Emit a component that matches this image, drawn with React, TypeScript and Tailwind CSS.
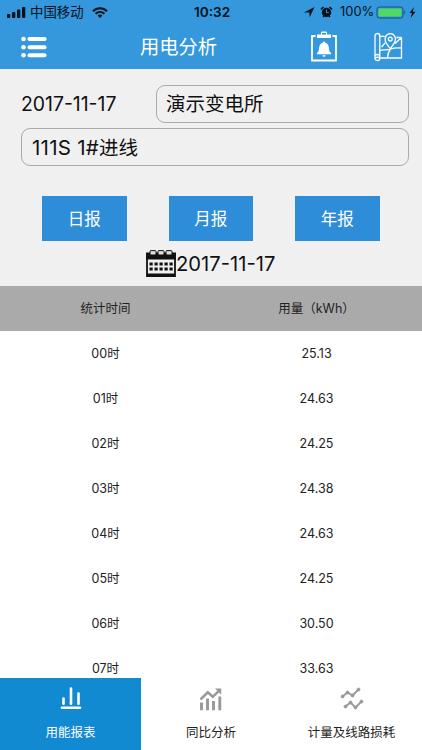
import React from "react";

const rows = [
  ["00时", "25.13"],
  ["01时", "24.63"],
  ["02时", "24.25"],
  ["03时", "24.38"],
  ["04时", "24.63"],
  ["05时", "24.25"],
  ["06时", "30.50"],
  ["07时", "33.63"],
];

function StatusBar() {
  return (
    <div className="flex h-6 items-center text-[13px] leading-6 text-[#04121e]">
      <svg className="ml-[7px] h-[11px] w-[19px]" viewBox="0 0 19 11" fill="currentColor">
        <rect x="0" y="7" width="3.3" height="4" rx="1" />
        <rect x="5" y="5" width="3.3" height="6" rx="1" />
        <rect x="10" y="2.5" width="3.3" height="8.5" rx="1" />
        <rect x="15" y="0" width="3.3" height="11" rx="1" />
      </svg>
      <span className="ml-[4px] w-[55px] whitespace-nowrap text-[13.4px]">中国移动</span>
      <svg className="ml-[7px] h-[11px] w-[16px]" viewBox="0 0 16 11">
        <path d="M1 4.2C5 .3 11 .3 15 4.2M3.6 6.8c2.6-2.4 6.2-2.4 8.8 0" fill="none" stroke="currentColor" strokeWidth="2" />
        <path d="M5.6 8.5q2.4-1.8 4.8 0L8 11z" fill="currentColor" />
      </svg>
      <span className="ml-[86px] w-[38px] whitespace-nowrap text-[13.6px] leading-[22px] font-semibold">10:32</span>
      <svg className="ml-[71px] h-[12px] w-[12px]" viewBox="0 0 12 12" fill="currentColor">
        <path d="M11.5 1 6.5 11.5V6.5H1z" />
      </svg>
      <svg className="ml-[5px] h-[12px] w-[13px]" viewBox="0 0 13 12">
        <circle cx="6.5" cy="6.5" r="4.7" fill="currentColor" />
        <path d="M1 3.3 3.5 1M12 3.3 9.5 1M3 11l1.5-1.5M10 11 8.5 9.5" stroke="currentColor" strokeWidth="1.6" />
        <path d="M6.5 3.7v3h2.3" fill="none" stroke="#3598dc" strokeWidth="1" />
      </svg>
      <span className="ml-[7px] w-[34px] whitespace-nowrap text-[12.9px]">100%</span>
      <svg className="ml-[2px] h-[13px] w-[40px]" viewBox="0 0 40 13">
        <rect x="1" y="1" width="26" height="11" rx="2.5" fill="none" stroke="#175079" />
        <rect x="2.5" y="2.5" width="23" height="8" rx="1" fill="#4fd964" />
        <path d="M28.3 4.5q2 2 0 4z" fill="#175079" />
        <path d="m38 1-4.5 6H36l-1.5 5L39.5 5.7h-2.8z" fill="currentColor" />
      </svg>
    </div>
  );
}

function NavBar() {
  return (
    <div className="flex h-[45px] items-center text-white">
      <svg className="ml-[21px] h-[22px] w-[26px]" viewBox="0 0 26 22" fill="currentColor">
        <circle cx="2.5" cy="3" r="2.3" />
        <circle cx="2.5" cy="11.3" r="2.3" />
        <circle cx="2.5" cy="19.3" r="2.3" />
        <rect x="6.5" y="1" width="19" height="4" rx="1.8" />
        <rect x="6.5" y="9.3" width="19" height="4" rx="1.8" />
        <rect x="6.5" y="17.3" width="19" height="4" rx="1.8" />
      </svg>
      <h1 className="ml-[93px] whitespace-nowrap text-[19.3px] leading-[46px]">用电分析</h1>
      <div className="mr-[19px] ml-auto flex items-center gap-[35px]">
        <svg className="h-[32px] w-[28px]" viewBox="0 0 28 32" fill="none">
          <path d="M5.5 5H2v24.5h24V5h-3.5" stroke="currentColor" strokeWidth="1.8" />
          <path d="M7 3.5h4V2q0-1.400 1.400-1.400h3.200Q17 .6 17 2v1.500h4V7H7z" fill="currentColor" />
          <rect x="12" y="1.9" width="4" height="1.7" fill="#3598dc" />
          <path d="M14 10.500q1.200 0 1.300 1.300c2.700.8 3.600 3 3.700 6 .1 2.500.8 3.400 2 4.200v1.200H7V22c1.200-.8 1.900-1.700 2-4.200.1-3 1-5.200 3.700-6q.1-1.300 1.300-1.300zM12.300 24.200h3.400q-.3 1.500-1.700 1.500t-1.700-1.500z" fill="currentColor" />
        </svg>
        <svg className="h-[30px] w-[30px]" viewBox="0 0 30 30" fill="none" stroke="currentColor" strokeWidth="1.3">
          <rect x="2" y="1.5" width="4.800" height="27" rx="2.300" />
          <path d="M2 23.500q2.300-2 4.800 0M2 26q2.400-1.500 4.800 0M6.800 4.300h5M6.800 26H28.500V5.500M23.500 5.500h5M12.300 9c-.8-4.200 1.500-7.400 5-7.400s5.800 3.200 5 6.900c-.7 3-3.300 5.300-5 8.500-1.700-3.200-4.300-5-5-8zM7 18.500c3-1.500 7 .3 11-1.500 3-1.300 5.500-1.500 10.500-1M17.500 17c-2 2.500-2.800 5.300-3 9M22 11.500l6-5.500M8.500 15l3.500-4" />
          <circle cx="17.3" cy="7" r="1.9" />
        </svg>
      </div>
    </div>
  );
}

function CalendarIcon() {
  return (
    <svg className="mb-[2px] h-[27px] w-[30px]" viewBox="0 0 30 27">
      <path d="M1 3.5h28V26H1z" fill="#f0f0f0" stroke="#111" strokeWidth="1.8" />
      <path d="M0 3h30v6.500H0zM1 23.400h28V26H1z" fill="#111" />
      {[4, 12, 20].map((x) => (
        <rect key={x} x={x} y=".6" width="6" height="4.4" rx="1" fill="#ddd" stroke="#111" />
      ))}
      {[12.5, 17.5].map((y) =>
        [3.5, 8.5, 13.5, 18.5, 23.5].map((x) => (
          <rect key={`${x}-${y}`} x={x} y={y} width="3.2" height="3" fill="#111" />
        )),
      )}
    </svg>
  );
}

function TabBar() {
  return (
    <nav className="grid h-[72px] shrink-0 grid-cols-[141px_140px_141px] bg-white text-[12.5px] leading-[20px] text-[#222]">
      <div className="flex flex-col items-center bg-[#128ad2] pt-[9px] text-white">
        <svg className="h-[23px] w-[22px]" viewBox="0 0 22 23" fill="none" stroke="currentColor" strokeWidth="2.6" strokeLinecap="round">
          <path d="M3.5 11.5v5.2M11 1.5v15.2M18.5 6.5v10.2" />
          <path d="M2 20.8h18" />
        </svg>
        <span className="mt-[13px]">用能报表</span>
      </div>
      <div className="flex flex-col items-center pt-[9px]">
        <svg className="h-[24px] w-[24px]" viewBox="0 0 24 24" fill="none" stroke="#999" strokeWidth="2.9">
          <path d="M2.5 15.5v7.8M8.500 11.500v11.800M14.500 14v9.300M20.800 9.500v13.800" />
          <path d="m1.500 12.500 7.300-7.200 5 4.500 6-6" strokeWidth="2.5" />
          <path d="M16 1.500h6.200v6.200z" fill="#999" stroke="none" />
        </svg>
        <span className="mt-[12px]">同比分析</span>
      </div>
      <div className="flex flex-col items-center pt-[9px]">
        <svg className="h-[24px] w-[24px]" viewBox="0 0 24 24" fill="#999" stroke="#999" strokeWidth="1.9">
          <path d="m2.500 9.500 5-4 5 3 6-6M5.500 19.500l5-4 5 5 6-6" fill="none" />
          {[[2.5, 9.5], [7.5, 5.5], [12.5, 8.5], [18.5, 2.5], [5.5, 19.5], [10.5, 15.5], [15.5, 20.5], [21.5, 14.5]].map(([x, y]) => (
            <circle key={`${x}-${y}`} cx={x} cy={y} r="1.5" strokeWidth=".8" />
          ))}
        </svg>
        <span className="mt-[12px]">计量及线路损耗</span>
      </div>
    </nav>
  );
}

export default function App() {
  return (
    <div className="flex h-[750px] w-[422px] flex-col overflow-hidden bg-white font-[Inter,'Noto_Sans_CJK_SC',sans-serif]">
      <header className="shrink-0 bg-[#3598dc]">
        <StatusBar />
        <NavBar />
      </header>
      <section className="h-[217px] shrink-0 bg-[#f0f0f0] pt-[16px] text-[19.5px] text-[#111]">
        <div className="flex pr-[13px] pl-[21px]">
          <div className="w-[135px] whitespace-nowrap text-[19.4px] leading-[38px]">2017-11-17</div>
          <div className="h-[38px] flex-1 rounded-[9px] border border-[#aaa] pl-[9px] leading-[37px]">演示变电所</div>
        </div>
        <div className="mt-[5px] mr-[13px] ml-[21px] h-[38px] rounded-[9px] border border-[#aaa] pl-[10px] leading-[37px]">
          <span className="text-[20.5px] tracking-[0.25px]">111S 1#</span>进线
        </div>
        <div className="mt-[30px] flex gap-[42px] pl-[42px] text-[16.5px] leading-[46px] text-white">
          {["日报", "月报", "年报"].map((label) => (
            <button key={label} className="h-[45px] w-[84.5px] bg-[#2e8dd8]">{label}</button>
          ))}
        </div>
        <div className="mt-[8px] flex h-[30px] items-center pl-[146px]">
          <CalendarIcon />
          <span className="whitespace-nowrap text-[20.2px] leading-[30px]">2017-11-17</span>
        </div>
      </section>
      <main className="min-h-0 flex-1 overflow-hidden text-center text-[12.5px] text-[#222]">
        <div className="grid h-[45px] grid-cols-2 bg-[#aaa] leading-[45px]">
          <span>统计时间</span>
          <span>用量（kWh）</span>
        </div>
        {rows.map(([time, usage]) => (
          <div key={time} className="grid h-[45px] grid-cols-2 leading-[45px]">
            <span>{time}</span>
            <span>{usage}</span>
          </div>
        ))}
      </main>
      <TabBar />
    </div>
  );
}
